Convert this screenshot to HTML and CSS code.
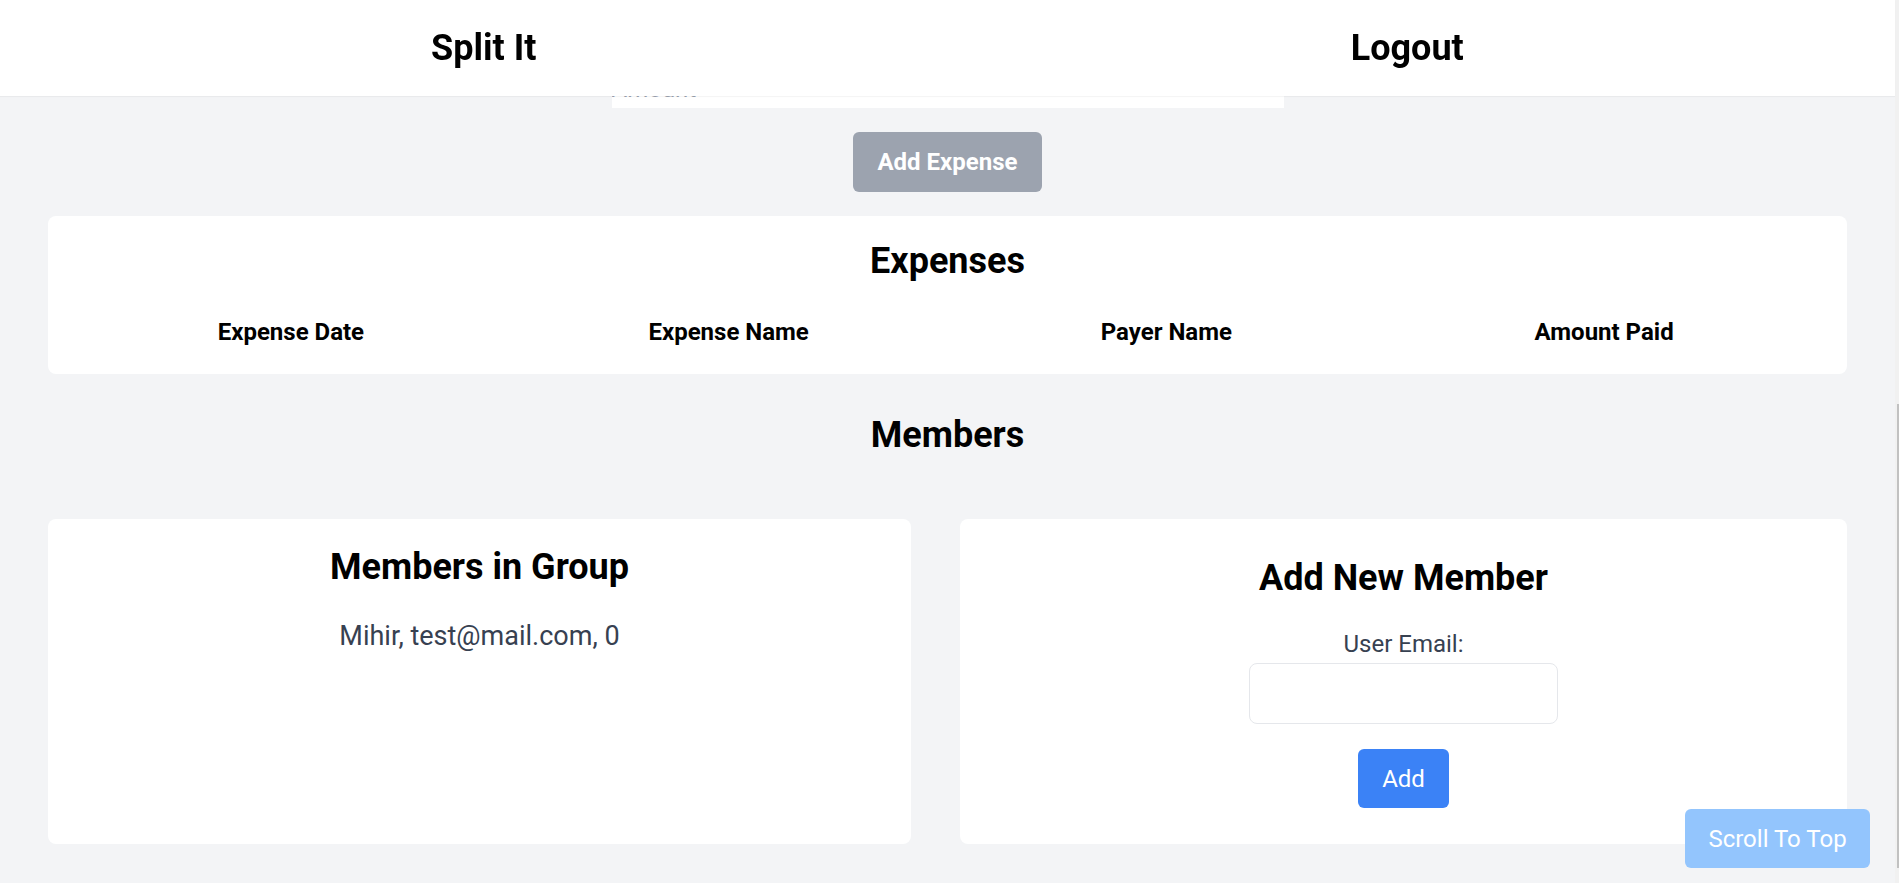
FILE: index.html
```html
<!DOCTYPE html>
<html lang="en">
<head>
<meta charset="utf-8">
<title>Split It</title>
<link rel="stylesheet" href="styles.css">
</head>
<body>
<header class="topbar">
  <div class="topbar-item">Split It</div>
  <div class="topbar-item">Logout</div>
</header>

<main class="page">
  <form class="expense-form">
    <input class="amount-input" type="text" placeholder="Amount">
    <button class="btn btn-expense" type="button">Add Expense</button>
  </form>

  <section class="card expenses-card">
    <h2 class="card-title">Expenses</h2>
    <table class="expense-table">
      <thead>
        <tr>
          <th>Expense Date</th>
          <th>Expense Name</th>
          <th>Payer Name</th>
          <th>Amount Paid</th>
        </tr>
      </thead>
      <tbody></tbody>
    </table>
  </section>

  <h2 class="section-title">Members</h2>

  <div class="members-grid">
    <section class="card members-card">
      <h3 class="card-title">Members in Group</h3>
      <p class="member-row">Mihir, test@mail.com, 0</p>
    </section>
    <section class="card add-member-card">
      <h3 class="card-title">Add New Member</h3>
      <label class="field-label" for="email">User Email:</label>
      <input class="email-input" id="email" type="email">
      <button class="btn btn-add" type="button">Add</button>
    </section>
  </div>
</main>

<button class="btn scroll-top" type="button">Scroll To Top</button>
<div class="scrollbar"><div class="scrollbar-thumb"></div></div>
</body>
</html>
```

FILE: styles.css
```css
* { box-sizing: border-box; }

html, body {
  margin: 0;
  height: 100%;
  overflow: hidden;
}

body {
  background: #f3f4f6;
  font-family: Roboto, "Liberation Sans", Arial, sans-serif;
  color: #000;
  padding-right: 4px;
}

.topbar {
  position: fixed;
  top: 0;
  left: 0;
  right: 4px;
  height: 96px;
  background: #fff;
  display: grid;
  grid-template-columns: 1fr 1fr;
  align-items: center;
  padding: 0 26px 0 22px;
  box-shadow: 0 1px 1px rgba(0, 0, 0, 0.04);
  z-index: 10;
}

.topbar-item {
  text-align: center;
  font-size: 36px;
  line-height: 40px;
  font-weight: 700;
}

.page {
  padding: 70px 48px 0;
}

.expense-form {
  display: flex;
  flex-direction: column;
  align-items: center;
}

.amount-input {
  display: block;
  width: 100%;
  max-width: 672px;
  height: 38px;
  padding: 5px 0;
  border: none;
  outline: none;
  background: #fff;
  font-family: inherit;
  font-size: 24px;
  line-height: 28px;
}

.amount-input::placeholder { color: #9ca3af; }

.btn {
  border: none;
  border-radius: 6px;
  color: #fff;
  font-family: inherit;
  font-size: 24px;
  line-height: 36px;
  padding: 12px 24px;
  cursor: pointer;
}

.btn-expense {
  margin-top: 24px;
  background: #9ca3af;
  font-weight: 700;
}

.card {
  background: #fff;
  border-radius: 8px;
}

.card-title {
  margin: 0;
  text-align: center;
  font-size: 36px;
  line-height: 40px;
  font-weight: 700;
}

.expenses-card {
  margin-top: 24px;
  padding: 25px 24px 26px;
}

.expense-table {
  width: 100%;
  margin-top: 35px;
  border-collapse: collapse;
  table-layout: fixed;
}

.expense-table th {
  padding: 0;
  font-size: 24px;
  line-height: 32px;
  font-weight: 700;
  text-align: center;
}

.section-title {
  margin: 41px 0 0;
  text-align: center;
  font-size: 36px;
  line-height: 40px;
  font-weight: 700;
}

.members-grid {
  margin-top: 64px;
  display: grid;
  grid-template-columns: 863fr 887fr;
  gap: 49px;
}

.members-card {
  padding: 28px 24px;
}

.member-row {
  margin: 31px 0 0;
  text-align: center;
  font-size: 27px;
  line-height: 36px;
  color: #374151;
}

.add-member-card {
  display: flex;
  flex-direction: column;
  align-items: center;
  padding: 39px 24px 36px;
}

.field-label {
  margin-top: 28px;
  font-size: 24px;
  line-height: 36px;
  color: #374151;
}

.email-input {
  margin-top: 1px;
  width: 309px;
  height: 61px;
  padding: 12px;
  border: 1px solid #e5e7eb;
  border-radius: 8px;
  font-family: inherit;
  font-size: 24px;
  outline: none;
}

.btn-add {
  margin-top: 25px;
  background: #3b82f6;
  height: 59px;
  padding: 11px 24px;
}

.scroll-top {
  position: fixed;
  right: 29px;
  bottom: 15px;
  width: 185px;
  height: 59px;
  padding: 11px 0;
  background: #93c5fd;
  z-index: 20;
}

.scrollbar {
  position: fixed;
  top: 0;
  right: 0;
  bottom: 0;
  width: 4px;
  background: #f1f1f1;
}

.scrollbar-thumb {
  position: absolute;
  top: 404px;
  left: 2px;
  width: 2px;
  height: 464px;
  background: #c1c1c1;
}
```
